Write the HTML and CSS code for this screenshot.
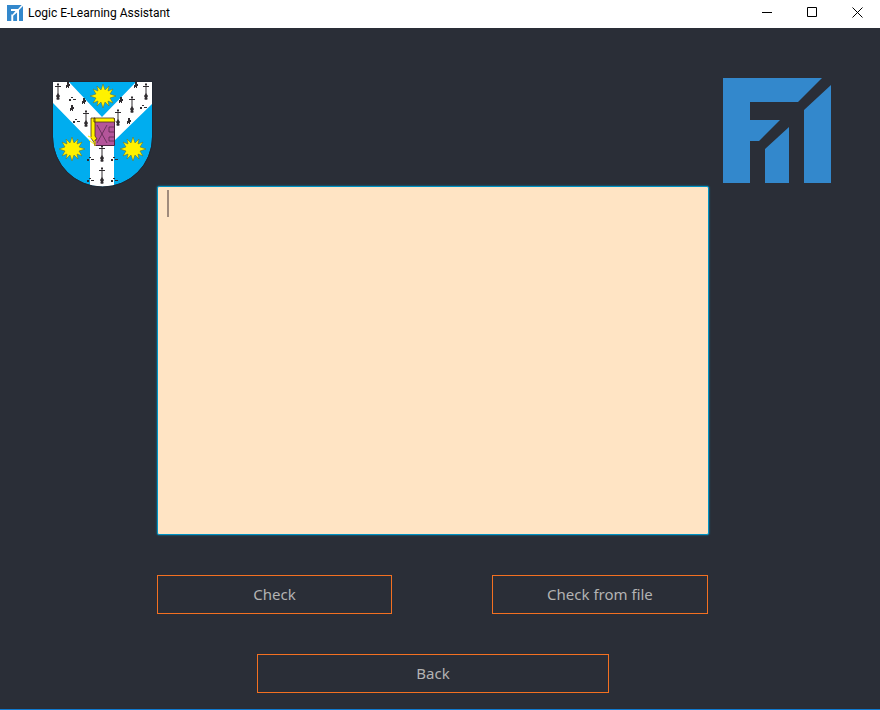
FILE: index.html
```html
<!DOCTYPE html>
<html lang="en">
<head>
<meta charset="utf-8">
<title>Logic E-Learning Assistant</title>
<link rel="stylesheet" href="styles.css">
</head>
<body>
<header class="titlebar">
  <svg class="app-icon" viewBox="0 0 108 105" preserveAspectRatio="none" aria-hidden="true">
    <rect width="108" height="105" fill="#3388cc"/>
    <path fill="#fff" d="M99 0h9v7L81 32v73H68V49L42 71v34H29V63h9L57 40H27V27h48z"/>
  </svg>
  <h1 class="title">Logic E-Learning Assistant</h1>
  <div class="controls">
    <button class="control" aria-label="Minimize"><svg width="11" height="11" viewBox="0 0 11 11"><path d="M0 5.500h10" stroke="#000"/></svg></button>
    <button class="control" aria-label="Maximize"><svg width="11" height="11" viewBox="0 0 11 11"><path d="M.5.500h9v9h-9z" fill="none" stroke="#000"/></svg></button>
    <button class="control" aria-label="Close"><svg width="11" height="11" viewBox="0 0 11 11"><path d="M.5.500l10 10M10.500 .500L.5 10.500" stroke="#000"/></svg></button>
  </div>
</header>
<main class="page">
  <div class="logos">
    <svg class="crest" width="102" height="107" viewBox="0 0 102 107" role="img" aria-label="University crest">
      <defs>
        <clipPath id="shield"><path d="M1 1H100V56A49.500 49.500 0 0 1 1 56Z"/></clipPath>
        <path id="sun" d="M0-12L2-6L6-10L5-5L10-7L7-2L13 0L7 2L10 7L5 5L6 10L2 6L0 12L-2 6L-6 10L-5 5L-10 7L-7 2L-13 0L-7-2L-10-7L-5-5L-6-10L-2-6Z" fill="#fff200" stroke="#6b6b20" stroke-width=".5"/>
        <g id="ermine" fill="#302c30"><path d="M-.5-9h1v11h-1zM-3-6h6v1h-6zM-1-8h2v1h-2z"/><path d="M0 1l2 3-1 2 1 1-2 1-2-1 1-1-1-2z"/></g>
        <g id="spot" fill="#302c30"><path d="M-1-2h2v1h-2zM-3 0h2v2h-2zM1 0h3v1H1z"/></g>
        <path id="tail" fill="#302c30" d="M-1-3h2v2h1v2h-1v2h-1v-1h-1v1h-1v-3h1z"/>
      </defs>
      <g clip-path="url(#shield)">
        <path fill="#00adef" d="M0 0h102v107H0z"/>
        <path fill="#fff" d="M1 1h16l33 35L84 1h17v21L62 60v47H38V60L1 22z"/>
        <use href="#ermine" x="6" y="11"/><use href="#ermine" x="34" y="38"/>
        <use href="#ermine" x="94" y="11"/><use href="#ermine" x="80" y="24"/><use href="#ermine" x="66" y="37"/>
        <use href="#ermine" x="50" y="73"/><use href="#ermine" x="50" y="95"/>
        <use href="#tail" x="16" y="4"/><use href="#spot" x="20" y="18"/><use href="#tail" x="20" y="27"/>
        <use href="#tail" x="32" y="20"/><use href="#spot" x="24" y="40"/><use href="#tail" x="84" y="4"/>
        <use href="#tail" x="69" y="19"/><use href="#spot" x="91" y="26"/><use href="#tail" x="77" y="40"/>
        <use href="#spot" x="38" y="78"/><use href="#spot" x="62" y="78"/><use href="#spot" x="38" y="99"/><use href="#spot" x="62" y="99"/>
      </g>
      <use href="#sun" x="51" y="15"/><use href="#sun" x="20" y="68"/><use href="#sun" x="81" y="68"/>
      <path fill="#b4559a" stroke="#4b2340" d="M42.500 37.500h20v27h-20z"/>
      <path fill="#fff200" stroke="#4b3018" stroke-width=".8" d="M39 37h4v18l2 3-2 1v4l-4-6zM42 37h20l1 4H42z"/>
      <path fill="none" stroke="#fff200" d="M36 55l6 3M37 59l5 4M43 60v5"/>
      <path fill="none" stroke="#5b2a4f" stroke-width=".8" d="M45 44l5 9 5-9M50 53l-5 9M50 53l5 9M62 46h-5v5h5M62 56h-5v4h5"/>
      <path fill="none" stroke="#222833" d="M.5.500H100.500V56A50 50 0 0 1 .5 56Z"/>
    </svg>
    <svg class="faculty" width="108" height="105" viewBox="0 0 108 105" role="img" aria-label="Faculty logo">
      <path fill="#3388cc" d="M0 0h99L75 24H27v18h30L36 63h-9v42H0zM42 71L66 49v56H42zM81 32L108 7v98H81z"/>
    </svg>
  </div>
  <div class="workspace">
    <div class="editor-box">
      <textarea class="editor" aria-label="Formula"></textarea>
      <span class="caret"></span>
    </div>
    <div class="actions">
      <button class="btn check">Check</button>
      <button class="btn file">Check from file</button>
    </div>
    <button class="btn back">Back</button>
  </div>
</main>
</body>
</html>
```
FILE: styles.css
```css
* { box-sizing: border-box; }
body {
  margin: 0;
  min-height: 100vh;
  display: flex;
  flex-direction: column;
  background: #2a2e37;
  font-family: "Noto Sans", sans-serif;
}
.titlebar {
  display: flex;
  align-items: center;
  height: 28px;
  padding-left: 7px;
  background: #fff;
}
.app-icon { width: 16px; height: 16px; margin-bottom: 3px; }
.title {
  margin: 0 0 2px 5px;
  font-size: 12px;
  line-height: 16px;
  font-weight: 400;
  font-family: Roboto, sans-serif;
  color: #000;
}
.controls { display: flex; height: 100%; margin-left: auto; }
.control {
  width: 45px;
  padding: 0 0 4px;
  border: 0;
  background: none;
  display: flex;
  align-items: center;
  justify-content: center;
}
.page {
  flex: 1;
  display: flex;
  flex-direction: column;
  padding-top: 50px;
  border-bottom: 1px solid #0f7ad0;
}
.logos {
  display: flex;
  justify-content: space-between;
  height: 108px;
  padding: 0 49px 0 52px;
}
.crest { margin-top: 3px; }
.workspace {
  flex: 1;
  display: flex;
  flex-direction: column;
  padding: 0 171px 16px 157px;
}
.editor-box { position: relative; flex: 1; display: flex; min-height: 200px; }
.editor {
  flex: 1;
  min-width: 0;
  padding: 4px 10px;
  border: 1px solid #0093c4;
  border-radius: 2px;
  box-shadow: 0 0 2px #0093c4;
  background: #ffe4c4;
  color: #2a2e37;
  font: 20px/26px "Noto Sans", sans-serif;
  resize: none;
  outline: 0;
}
.caret {
  position: absolute;
  left: 10px;
  top: 4px;
  width: 2px;
  height: 27px;
  background: #a08b7c;
}
.actions { display: flex; gap: 100px; margin-top: 40px; }
.btn {
  height: 39px;
  padding: 0 0 2px;
  border: 1px solid #f37021;
  background: transparent;
  color: #b3b3b3;
  font: 15px/22px "Noto Sans", sans-serif;
}
.check { flex: 235; }
.file { flex: 216; margin-right: 1px; }
.back { margin: 40px 100px 0; }
```
